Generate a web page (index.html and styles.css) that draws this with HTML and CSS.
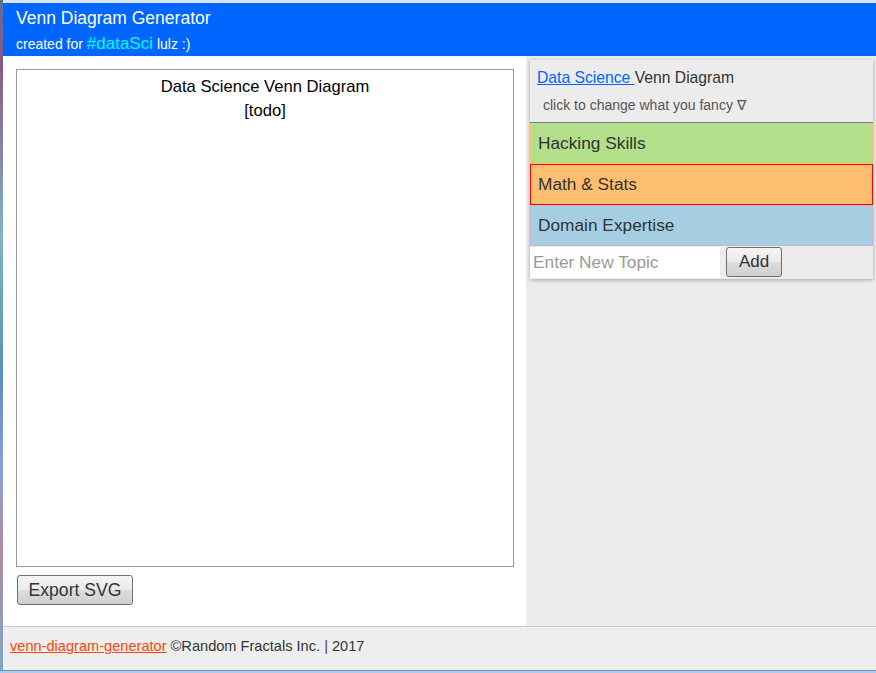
FILE: index.html
```html
<!DOCTYPE html>
<html>
<head>
<meta charset="utf-8">
<link rel="stylesheet" href="styles.css">
</head>
<body>
<div class="desk">
  <div class="app">
    <header class="topbar">
      <div class="title">Venn Diagram Generator</div>
      <div class="subtitle">created for <span class="tag">#dataSci</span> lulz :)</div>
    </header>
    <main class="main">
      <section class="left">
        <div class="diagram">
          <div class="dtitle">Data Science Venn Diagram</div>
          <div class="dtodo">[todo]</div>
        </div>
        <button class="btn export">Export SVG</button>
      </section>
      <section class="right">
        <div class="card">
          <div class="card-head">
            <div class="chead"><a href="#" class="link">Data Science </a>Venn Diagram</div>
            <div class="hint">click to change what you fancy ∇</div>
          </div>
          <div class="item green">Hacking Skills</div>
          <div class="item orange">Math &amp; Stats</div>
          <div class="item blue">Domain Expertise</div>
          <div class="addrow">
            <input class="topic" type="text" placeholder="Enter New Topic">
            <button class="btn add">Add</button>
          </div>
        </div>
      </section>
    </main>
    <footer class="footer">
      <a href="#" class="flink">venn-diagram-generator</a> ©Random Fractals Inc. <span class="pipe">|</span> 2017
    </footer>
  </div>
  <div class="taskedge"></div>
</div>
</body>
</html>
```

FILE: styles.css
```css
* { box-sizing: border-box; }
html, body { margin: 0; padding: 0; }
body {
  width: 876px;
  height: 673px;
  overflow: hidden;
  font-family: "Liberation Sans", Arial, sans-serif;
  background: linear-gradient(180deg, #5b6f9a 0%, #8a5a86 10%, #7fb4c8 35%, #5a8fb8 55%, #8aa0d8 70%, #b08aa0 82%, #7aa8c8 100%);
}
.desk {
  display: flex;
  flex-direction: column;
  height: 673px;
  padding-left: 3px;
}
.app {
  display: flex;
  flex-direction: column;
  height: 670px;
  border-top: 3px solid #dae5f1;
  background: #fff;
}
.taskedge {
  height: 3px;
  margin-left: -3px;
  background: #a9cdf0;
  border-top: 1px solid #6c93ba;
}
.topbar {
  background: #0066ff;
  color: #fff;
  height: 53px;
  padding: 5px 13px 0;
}
.title { font-size: 17.5px; line-height: 20px; }
.subtitle { font-size: 14px; line-height: 20px; margin-top: 6px; }
.tag { color: #00ffff; font-size: 17px; }
.main {
  flex: 1;
  display: flex;
}
.left {
  width: 523px;
  background: #fff;
  padding: 13px 9px 0 13px;
}
.diagram {
  width: 498px;
  height: 498px;
  border: 1px solid #999;
  text-align: center;
  font-size: 16.6px;
  line-height: 24px;
  padding-top: 5px;
  color: #000;
}
.btn {
  font-family: "Liberation Sans", Arial, sans-serif;
  color: #333;
  border: 1px solid #707070;
  border-radius: 3px;
  background: linear-gradient(180deg, #f4f4f4 0%, #ebebeb 50%, #dddddd 51%, #cfcfcf 100%);
  padding: 0;
}
.export {
  margin-top: 8px;
  margin-left: 1px;
  width: 116px;
  height: 30px;
  font-size: 17.6px;
}
.right {
  flex: 1;
  background: #ececec;
  padding: 4px 3px 0 4px;
}
.card {
  background: #ececec;
  box-shadow: 0 1px 4px rgba(0,0,0,0.3);
}
.card-head {
  height: 63px;
  padding: 8px 7px 0;
  border-bottom: 1px solid #7a7a7a;
}
.chead { font-size: 15.7px; line-height: 20px; color: #333; }
.link { color: #0066ff; text-decoration: underline; }
.hint { font-size: 14px; line-height: 20px; color: #555; margin-top: 7px; padding-left: 6px; }
.item {
  height: 41px;
  line-height: 39px;
  font-size: 17.3px;
  color: #333;
  padding: 0 7px;
  border: 1px solid transparent;
}
.green { background: #b2df8a; border-color: #fdbf6f; border-top-color: #b2df8a; }
.orange { background: #fdbf6f; border-color: #ff0000; }
.blue { background: #a6cee3; border-color: #cab2d6; }
.addrow {
  display: flex;
  align-items: center;
  height: 33px;
  padding-bottom: 1px;
}
.topic {
  width: 190px;
  height: 31px;
  border: none;
  background: #fff;
  font-family: "Liberation Sans", Arial, sans-serif;
  font-size: 17.3px;
  padding: 0 3px;
  outline: none;
}
.topic::placeholder { color: #999; }
.add {
  margin-left: 6px;
  width: 56px;
  height: 30px;
  font-size: 17px;
}
.footer {
  height: 44px;
  background: #eeeeee;
  border-top: 1px solid #cccccc;
  padding: 10px 7px 0;
  font-size: 14.6px;
  line-height: 18px;
  color: #333;
}
.flink { color: #ff4500; text-decoration: underline; }
.pipe { color: #6a2a8a; }
```
